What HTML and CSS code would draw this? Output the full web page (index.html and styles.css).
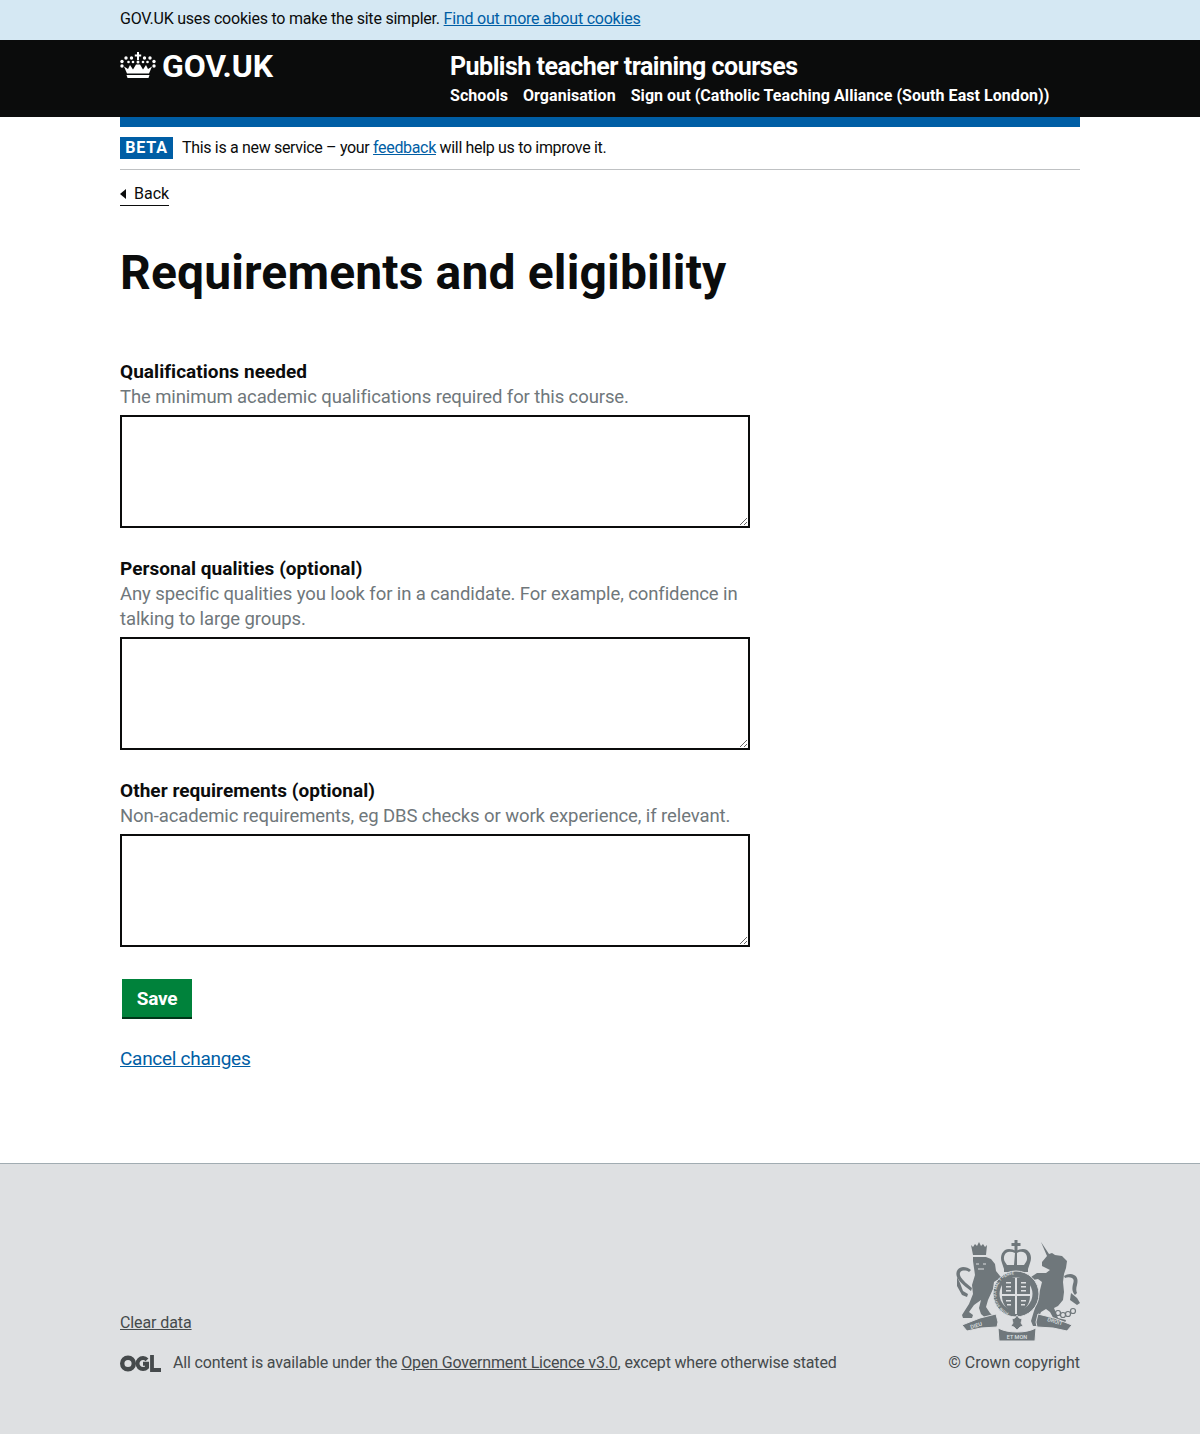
FILE: index.html
```html
<!DOCTYPE html>
<html lang="en">
<head>
  <meta charset="UTF-8">
  <title>Requirements and eligibility</title>
  <link rel="stylesheet" href="styles.css">
</head>
<body>
  <div class="cookies">
    <p class="wrap">GOV.UK uses cookies to make the site simpler. <a href="#">Find out more about cookies</a></p>
  </div>

  <header class="top">
    <div class="wrap top-inner">
      <a class="logo" href="#">
        <svg class="crown" viewBox="0 0 36 26" width="36" height="26" fill="#fff" aria-hidden="true">
          <path d="M17 0h2v2.500h2.200v2H19V8h-2V4.500h-2.200v-2H17z"/>
          <circle cx="18" cy="10" r="1.500"/>
          <circle cx="11.500" cy="6" r="1.700"/><circle cx="24.500" cy="6" r="1.700"/>
          <circle cx="6" cy="6" r="1.700"/><circle cx="30" cy="6" r="1.700"/>
          <circle cx="2" cy="9.500" r="1.700"/><circle cx="34" cy="9.500" r="1.700"/>
          <circle cx="2" cy="14" r="1.700"/><circle cx="34" cy="14" r="1.700"/>
          <circle cx="8.500" cy="10" r="1.300"/><circle cx="27.500" cy="10" r="1.300"/>
          <circle cx="13" cy="10" r="1.300"/><circle cx="23" cy="10" r="1.300"/>
          <path d="M4 14.500 8 17l2-4 3 4.500 3-5h4l3 5 3-4.500 2 4 4-2.500-3 7H7z"/>
          <path d="M6.500 23h23l-1 3h-21z"/>
        </svg>
        <span>GOV.UK</span>
      </a>
      <div class="service">
        <a class="service-name" href="#">Publish teacher training courses</a>
        <nav class="service-nav">
          <a href="#">Schools</a>
          <a href="#">Organisation</a>
          <a href="#">Sign out (Catholic Teaching Alliance (South East London))</a>
        </nav>
      </div>
    </div>
  </header>

  <div class="wrap">
    <div class="blue-bar"></div>
    <div class="phase">
      <strong class="tag">BETA</strong>
      <span class="phase-text">This is a new service – your <a href="#">feedback</a> will help us to improve it.</span>
    </div>
    <a class="back" href="#">Back</a>

    <main>
      <h1>Requirements and eligibility</h1>
      <form>
        <div class="field">
          <label for="qualifications">Qualifications needed</label>
          <p class="hint">The minimum academic qualifications required for this course.</p>
          <textarea id="qualifications"></textarea>
        </div>
        <div class="field">
          <label for="qualities">Personal qualities (optional)</label>
          <p class="hint">Any specific qualities you look for in a candidate. For example, confidence in talking to large groups.</p>
          <textarea id="qualities"></textarea>
        </div>
        <div class="field">
          <label for="other">Other requirements (optional)</label>
          <p class="hint">Non-academic requirements, eg DBS checks or work experience, if relevant.</p>
          <textarea id="other"></textarea>
        </div>
        <button type="submit">Save</button>
      </form>
      <a class="cancel" href="#">Cancel changes</a>
    </main>
  </div>

  <footer>
    <div class="wrap footer-inner">
      <div class="footer-left">
        <a class="clear" href="#">Clear data</a>
        <div class="licence">
          <svg class="ogl" viewBox="0 0 41 17" width="41" height="17" fill="none" stroke="#454a4c" aria-hidden="true">
            <circle cx="8" cy="8.500" r="5.800" stroke-width="4.400"/>
            <path d="M27 4.800a5.500 5.500 0 1 0 0 7.500V8.800h-4" stroke-width="4"/>
            <path d="M32 0v15h9" stroke-width="3.800"/>
          </svg>
          <span class="licence-text">All content is available under the <a href="#">Open Government Licence v3.0</a>, except where otherwise stated</span>
        </div>
      </div>
      <div class="crest-block">
        <svg class="crest" viewBox="0 0 126 102" width="126" height="102" fill="#6f777b" aria-hidden="true">
          <!-- lion: crown, head and body -->
          <path d="M17 5l2 2 2-3 2 2 2-4 2 4 2-2 2 3 2-2-1 10H19z"/>
          <path d="M19 17h13l5 2 4 5 1 7 4 5 6 3-1 3-8-2-3 2-1 7-5 11-2 7 4 6 6 6 1 3H36l-9-8-2-6 2-8-7 5-5 7 4 3-1 3H9l-1-3 7-11 4-10-1-9 3-10-1-7-1-7z"/>
          <path d="M22 24h3M29 24h3M24 29h6" stroke="#dee0e2" stroke-width="1" fill="none"/>
          <!-- lion tail -->
          <path d="M17 51c-5-4-11-8-14-14-2-5 1-10 6-10 3 0 6 1 8 3l-2 2c-3-2-8-2-9 1-1 3 3 7 6 10l6 5z"/>
          <path d="M3 37l3 6 3 8 5 3-1 3-5-2-5-9z"/>
          <!-- unicorn -->
          <path d="M87 2l8 12 3-1 3 2 7 1 5 5-1 7-2 6-1 8 1 10-1 8-5 6-4 2 4 10 8 2-1 3h-9l-6-11-4-3-5 3-3 7 4 4-1 3h-8l-2-5 3-10 4-11 2-10 2-8-4-3-5 1-2-3 6-4h9l4-3-4-2-4-2v-4l5-6z"/>
          <!-- unicorn tail -->
          <path d="M110 36c3-2 7-3 10-1 4 2 4 6 3 10-1 3-1 6 0 8l-2 2c-3-3-3-7-2-11 1-3 1-5-1-6-2-1-5-1-7 0z"/>
          <path d="M117 53l6 5 3 5-3 2-7-5z"/>
          <!-- chain -->
          <g fill="none" stroke="#6f777b" stroke-width="1.200">
            <circle cx="104" cy="73" r="2.500"/>
            <circle cx="109" cy="75" r="2.500"/>
            <circle cx="114" cy="74" r="2.500"/>
            <circle cx="119" cy="71" r="2.500"/>
          </g>
          <!-- royal crown -->
          <path d="M60.500 0h3v3h3v3h-3v5h-3V6h-3V3h3z"/>
          <path fill-rule="evenodd" d="M62 11c3-2 8-3 11-1 4 3 5 8 3 13l-2 6H50l-2-6c-2-5-1-10 3-13 3-2 8-1 11 1zm-1 2c-3-1-6-2-9 0-2 2-3 6-1 9l2 3h7zm2 0v12h7l2-3c2-3 1-7-1-9-3-2-6-1-8 0z"/>
          <path d="M50 27h24v5H50z"/>
          <!-- garter -->
          <circle cx="62" cy="54" r="23" stroke="#dee0e2" stroke-width="1"/>
          <circle cx="62" cy="54" r="16.500" fill="#dee0e2"/>
          <path id="garter" d="M62 74a20 20 0 1 1 .1 0" fill="none"/>
          <text class="crest-text garter-text"><textPath href="#garter" startOffset="6%">HONI SOIT QUI MAL Y PENSE</textPath></text>
          <!-- shield -->
          <path d="M48 38h28v18c0 10-7 15-14 18-7-3-14-8-14-18z"/>
          <path d="M61 38h2v36h-2zM48 54h28v2H48z" fill="#dee0e2"/>
          <path d="M52 42h5v1.500h-5zM52 46h5v1.500h-5zM52 50h5v1.500h-5zM67 42h5v1.500h-5zM67 46h5v1.500h-5zM67 50h5v1.500h-5zM52 60h5v1.500h-5zM53 64h4v1.500h-4zM67 60h5v1.500h-5zM67 64h4v1.500h-4z" fill="#dee0e2"/>
          <!-- motto ribbon -->
          <g stroke="#dee0e2" stroke-width="1">
            <path d="M8 85l18-7 16-4 2 8-1 5-16 1-14 3z"/>
            <path d="M118 85l-18-7-16-4-2 8 1 5 16 1 14 3z"/>
            <path d="M44 88c6 3 12 4 19 4s13-1 19-4l-1 13H45z"/>
          </g>
          <path d="M63 75l2 3 3 1-1 4 2 3-3 1-3 3-3-3-3-1 2-3-1-4 3-1z" stroke="#dee0e2" stroke-width=".8"/>
          <text class="crest-text" transform="translate(17 89) rotate(-17)">DIEU</text>
          <text class="crest-text" transform="translate(93 81) rotate(17)">DROIT</text>
          <text class="crest-text motto" x="63" y="99">ET MON</text>
        </svg>
        <span class="copyright">© Crown copyright</span>
      </div>
    </div>
  </footer>
</body>
</html>
```

FILE: styles.css
```css
* { box-sizing: border-box; }
body {
  margin: 0;
  font-family: Roboto, Arial, sans-serif;
  color: #0b0c0c;
  background: #fff;
  font-size: 16px;
}
p { margin: 0; }
a { color: #005ea5; }
.wrap { width: 960px; margin: 0 auto; }

.cookies { background: #d5e8f3; height: 40px; padding-top: 8px; line-height: 22px; font-size: 16px; letter-spacing: -0.22px; }

.top { background: #0b0c0c; height: 77px; color: #fff; }
.top a { color: #fff; text-decoration: none; }
.top-inner { display: flex; }
.logo { flex: 0 0 330px; display: flex; align-items: flex-start; gap: 6px; font-size: 32px; font-weight: 700; line-height: 36px; padding-top: 8px; letter-spacing: -0.15px; }
.crown { margin-top: 4px; }
.service { padding-top: 10px; white-space: nowrap; }
.service-name { display: block; font-size: 25px; font-weight: 700; line-height: 34px; letter-spacing: -0.5px; }
.service-nav { display: flex; gap: 15px; font-size: 16px; font-weight: 700; line-height: 22px; margin-top: 1px; letter-spacing: 0.05px; }

.blue-bar { height: 10px; background: #005ea5; }
.phase { display: flex; align-items: center; gap: 9px; height: 43px; border-bottom: 1px solid #bfc1c3; font-size: 16px; }
.phase-text { letter-spacing: -0.33px; margin-top: -1px; }
.tag { background: #005ea5; color: #fff; font-size: 16px; line-height: 21px; height: 22px; width: 53px; text-align: center; letter-spacing: 0.8px; }
.back { display: inline-block; margin-top: 13px; padding-left: 14px; padding-bottom: 1px; font-size: 16px; line-height: 21px; color: #0b0c0c; text-decoration: none; border-bottom: 1px solid #0b0c0c; position: relative; }
.back::before { content: ""; position: absolute; left: 0; top: 6px; border: 5px solid transparent; border-left: 0; border-right: 6px solid #0b0c0c; }

h1 { font-size: 48px; line-height: 50px; font-weight: 700; margin: 42px 0 61px; letter-spacing: 0.15px; }
.field { margin-bottom: 28px; }
label { display: block; font-size: 19px; font-weight: 700; line-height: 25px; letter-spacing: 0.05px; }
.hint { width: 630px; font-size: 18.5px; line-height: 25px; color: #6f777b; padding-top: 1px; margin-bottom: 5px; letter-spacing: -0.1px; }
textarea { display: block; width: 630px; height: 113px; border: 2px solid #0b0c0c; background: #fff; padding: 5px; margin: 0; border-radius: 0; outline: none; }
button { display: block; margin: 32px 0 0 2px; width: 70px; height: 40px; background: #00823b; color: #fff; border: 0; border-bottom: 2px solid #003618; font: 700 19px Roboto, Arial, sans-serif; letter-spacing: -0.2px; padding: 0; }
.cancel { display: inline-block; margin-top: 27px; font-size: 19px; line-height: 25px; letter-spacing: -0.28px; }

footer { margin-top: 92px; height: 271px; background: #dee0e2; border-top: 1px solid #a1acb2; color: #454a4c; font-size: 16px; }
.footer-inner { display: flex; justify-content: space-between; align-items: flex-start; padding-top: 76px; }
footer a { color: #454a4c; }
.footer-left { padding-top: 73px; }
.clear { display: block; line-height: 20px; letter-spacing: -0.1px; }
.licence { display: flex; align-items: center; gap: 12px; margin-top: 20px; line-height: 20px; }
.licence-text { letter-spacing: -0.17px; }
.crest-block { display: flex; flex-direction: column; align-items: flex-end; }
.copyright { margin-top: 11px; line-height: 20px; letter-spacing: -0.05px; }

.crest-text { font-size: 5.500px; fill: #dee0e2; font-weight: 500; stroke: none; }
.garter-text { font-size: 4px; }
.motto { text-anchor: middle; }
```
